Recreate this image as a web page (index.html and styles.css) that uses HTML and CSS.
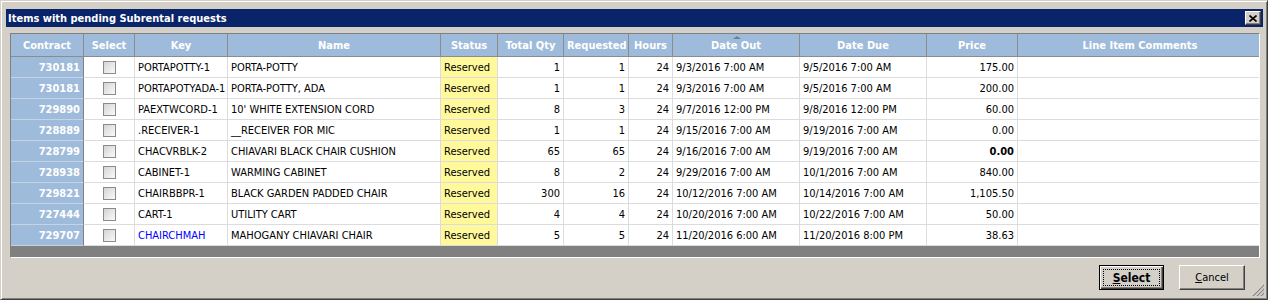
FILE: index.html
```
<!DOCTYPE html>
<html lang="en">
<head>
    <meta charset="UTF-8">
    <meta name="viewport" content="width=device-width, initial-scale=1.0">
    <title>Items with pending Subrental requests</title>
    <link rel="stylesheet" href="styles.css">
</head>
<body>
    <div class="window">
        <div class="titlebar">
            <span class="title">Items with pending Subrental requests</span>
            <button class="close" title="Close">
                <svg width="8" height="7" viewBox="0 0 8 7"><path d="M0.5 0.5 L7.5 6.5 M7.5 0.5 L0.5 6.5" stroke="#000" stroke-width="1.6"/></svg>
            </button>
        </div>

        <div class="grid">
            <table>
                <thead>
                    <tr>
                        <th class="c-contract">Contract</th>
                        <th class="c-select">Select</th>
                        <th class="c-key">Key</th>
                        <th class="c-name">Name</th>
                        <th class="c-status">Status</th>
                        <th class="c-total">Total Qty</th>
                        <th class="c-req">Requested</th>
                        <th class="c-hours">Hours</th>
                        <th class="c-out sorted">Date Out</th>
                        <th class="c-due">Date Due</th>
                        <th class="c-price">Price</th>
                        <th class="c-comments">Line Item Comments</th>
                    </tr>
                </thead>
                <tbody>
                    <tr>
                        <td class="contract">730181</td><td class="check"><span class="box"></span></td>
                        <td>PORTAPOTTY-1</td><td>PORTA-POTTY</td><td class="status">Reserved</td>
                        <td class="num">1</td><td class="num">1</td><td class="num">24</td>
                        <td>9/3/2016 7:00 AM</td><td>9/5/2016 7:00 AM</td><td class="num">175.00</td><td></td>
                    </tr>
                    <tr>
                        <td class="contract">730181</td><td class="check"><span class="box"></span></td>
                        <td>PORTAPOTYADA-1</td><td>PORTA-POTTY, ADA</td><td class="status">Reserved</td>
                        <td class="num">1</td><td class="num">1</td><td class="num">24</td>
                        <td>9/3/2016 7:00 AM</td><td>9/5/2016 7:00 AM</td><td class="num">200.00</td><td></td>
                    </tr>
                    <tr>
                        <td class="contract">729890</td><td class="check"><span class="box"></span></td>
                        <td>PAEXTWCORD-1</td><td>10' WHITE EXTENSION CORD</td><td class="status">Reserved</td>
                        <td class="num">8</td><td class="num">3</td><td class="num">24</td>
                        <td>9/7/2016 12:00 PM</td><td>9/8/2016 12:00 PM</td><td class="num">60.00</td><td></td>
                    </tr>
                    <tr>
                        <td class="contract">728889</td><td class="check"><span class="box"></span></td>
                        <td>.RECEIVER-1</td><td>__RECEIVER FOR MIC</td><td class="status">Reserved</td>
                        <td class="num">1</td><td class="num">1</td><td class="num">24</td>
                        <td>9/15/2016 7:00 AM</td><td>9/19/2016 7:00 AM</td><td class="num">0.00</td><td></td>
                    </tr>
                    <tr>
                        <td class="contract">728799</td><td class="check"><span class="box"></span></td>
                        <td>CHACVRBLK-2</td><td>CHIAVARI BLACK CHAIR CUSHION</td><td class="status">Reserved</td>
                        <td class="num">65</td><td class="num">65</td><td class="num">24</td>
                        <td>9/16/2016 7:00 AM</td><td>9/19/2016 7:00 AM</td><td class="num bold">0.00</td><td></td>
                    </tr>
                    <tr>
                        <td class="contract">728938</td><td class="check"><span class="box"></span></td>
                        <td>CABINET-1</td><td>WARMING CABINET</td><td class="status">Reserved</td>
                        <td class="num">8</td><td class="num">2</td><td class="num">24</td>
                        <td>9/29/2016 7:00 AM</td><td>10/1/2016 7:00 AM</td><td class="num">840.00</td><td></td>
                    </tr>
                    <tr>
                        <td class="contract">729821</td><td class="check"><span class="box"></span></td>
                        <td>CHAIRBBPR-1</td><td>BLACK GARDEN PADDED CHAIR</td><td class="status">Reserved</td>
                        <td class="num">300</td><td class="num">16</td><td class="num">24</td>
                        <td>10/12/2016 7:00 AM</td><td>10/14/2016 7:00 AM</td><td class="num">1,105.50</td><td></td>
                    </tr>
                    <tr>
                        <td class="contract">727444</td><td class="check"><span class="box"></span></td>
                        <td>CART-1</td><td>UTILITY CART</td><td class="status">Reserved</td>
                        <td class="num">4</td><td class="num">4</td><td class="num">24</td>
                        <td>10/20/2016 7:00 AM</td><td>10/22/2016 7:00 AM</td><td class="num">50.00</td><td></td>
                    </tr>
                    <tr>
                        <td class="contract">729707</td><td class="check"><span class="box"></span></td>
                        <td class="link">CHAIRCHMAH</td><td>MAHOGANY CHIAVARI CHAIR</td><td class="status">Reserved</td>
                        <td class="num">5</td><td class="num">5</td><td class="num">24</td>
                        <td>11/20/2016 6:00 AM</td><td>11/20/2016 8:00 PM</td><td class="num">38.63</td><td></td>
                    </tr>
                </tbody>
            </table>
        </div>

        <div class="buttons">
            <button class="btn default"><span class="focus"><u>S</u>elect</span></button>
            <button class="btn"><u>C</u>ancel</button>
        </div>

        <svg class="grip" width="12" height="12" viewBox="0 0 12 12">
            <path d="M11 1 L1 11 M11 5 L5 11 M11 9 L9 11" stroke="#fff" stroke-width="1"/>
            <path d="M12 1 L1 12 M12 5 L5 12 M12 9 L9 12" stroke="#808080" stroke-width="1.2"/>
        </svg>
    </div>
</body>
</html>
```

FILE: styles.css
```
body {
    margin: 0;
    background-color: #fff;
    font-family: "DejaVu Sans Condensed", "DejaVu Sans", sans-serif;
    font-size: 11px;
}

.window {
    position: relative;
    box-sizing: border-box;
    width: 1268px;
    height: 300px;
    background-color: #d4d0c8;
    border: 1px solid;
    border-color: #d4d0c8 #404040 #404040 #d4d0c8;
    box-shadow: inset 1px 1px #fff, inset -1px -1px #808080;
    padding: 8px 4px 0 5px;
    display: flex;
    flex-direction: column;
}

.titlebar {
    height: 18px;
    background-color: #0a246a;
    display: flex;
    align-items: center;
    justify-content: space-between;
    padding: 0 2px 0 2px;
}

.title {
    color: #fff;
    font-weight: bold;
    font-size: 11px;
}

.close {
    width: 16px;
    height: 14px;
    padding: 0;
    box-sizing: border-box;
    background-color: #d4d0c8;
    border: 1px solid;
    border-color: #fff #404040 #404040 #fff;
    box-shadow: inset -1px -1px #808080;
    display: flex;
    align-items: center;
    justify-content: center;
}

.grid {
    margin: 6px 3px 0 4px;
    height: 225px;
    box-sizing: border-box;
    background-color: #808080;
    border: 1px solid;
    border-color: #808080 #fff #fff #808080;
    overflow: hidden;
}

table {
    table-layout: fixed;
    border-collapse: separate;
    border-spacing: 0;
    width: 1251px;
    background-color: #fff;
}

th, td {
    box-sizing: border-box;
    padding: 0 3px;
    white-space: nowrap;
    overflow: hidden;
    text-overflow: clip;
    text-align: left;
    border-right: 1px solid #dcdcdc;
    border-bottom: 1px solid #dcdcdc;
    height: 21px;
    color: #000;
}

th {
    position: relative;
    height: 23px;
    padding-top: 1px;
    background-color: #9fbbdb;
    color: #fff;
    font-weight: bold;
    text-align: center;
    border-right: 1px solid #8c8c8c;
    border-bottom: 1px solid #8c8c8c;
}

.c-contract { width: 73px; }
.c-select { width: 51px; }
.c-key { width: 93px; }
.c-name { width: 213px; }
.c-status { width: 57px; }
.c-total { width: 66px; }
.c-req { width: 65px; }
.c-hours { width: 44px; }
.c-out { width: 127px; }
.c-due { width: 127px; }
.c-price { width: 91px; }
.c-comments { width: 244px; border-right: none; }

.sorted::before {
    content: "";
    position: absolute;
    top: 2px;
    left: 60px;
    border-left: 4px solid transparent;
    border-right: 4px solid transparent;
    border-bottom: 3px solid #6e7f94;
}

td.contract {
    background-color: #9fbbdb;
    color: #fff;
    font-weight: bold;
    text-align: right;
    border-right: 1px solid #808080;
    border-bottom: 1px solid #c4d3e6;
}

td.check {
    text-align: center;
    padding: 0;
}

.box {
    display: inline-block;
    vertical-align: middle;
    width: 13px;
    height: 13px;
    box-sizing: border-box;
    border: 1px solid #8a8a8a;
    background: linear-gradient(135deg, #d4d4d4, #fafafa);
}

td.status {
    background-color: #fff99c;
}

td.num {
    text-align: right;
}

td.bold {
    font-weight: bold;
}

td.link {
    color: #0000ff;
}

td:last-child {
    border-right: none;
}

.buttons {
    display: flex;
    justify-content: flex-end;
    gap: 15px;
    margin: 7px 18px 0 0;
}

.btn {
    width: 66px;
    height: 25px;
    padding: 0;
    box-sizing: border-box;
    background-color: #d4d0c8;
    font-family: "DejaVu Sans Condensed", "DejaVu Sans", sans-serif;
    font-size: 11px;
    color: #000;
    border: 1px solid;
    border-color: #fff #404040 #404040 #fff;
    box-shadow: inset -1px -1px #808080;
}

.btn.default {
    width: 65px;
    border: 1px solid #000;
    box-shadow: inset 1px 1px #fff, inset -1px -1px #404040, inset -2px -2px #808080;
    font-weight: bold;
    font-size: 12px;
    padding: 3px;
}

.btn .focus {
    display: flex;
    align-items: center;
    justify-content: center;
    height: 100%;
    border: 1px dotted #000;
    box-sizing: border-box;
}

.grip {
    position: absolute;
    right: 3px;
    bottom: 3px;
}
```
